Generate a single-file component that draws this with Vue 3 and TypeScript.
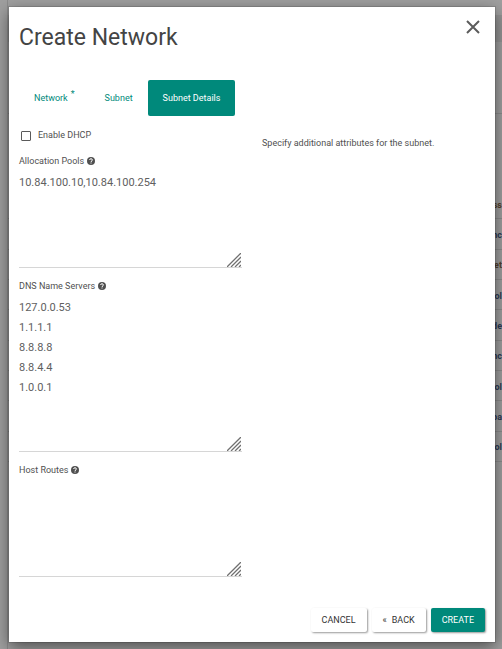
<script setup lang="ts">
import { ref } from 'vue'

interface Field {
  id: string
  label: string
  size: 'short' | 'tall'
  value: string
}

const tabs = [
  { name: 'Network', required: true },
  { name: 'Subnet', required: false },
  { name: 'Subnet Details', required: false },
]
const activeTab = ref('Subnet Details')
const enableDhcp = ref(false)

const fields = ref<Field[]>([
  { id: 'allocation-pools', label: 'Allocation Pools', size: 'short', value: '10.84.100.10,10.84.100.254' },
  { id: 'dns-servers', label: 'DNS Name Servers', size: 'tall', value: '127.0.0.53\n1.1.1.1\n8.8.8.8\n8.8.4.4\n1.0.0.1' },
  { id: 'host-routes', label: 'Host Routes', size: 'short', value: '' },
])

const pageRows = [
  { text: 'ss', tone: 'brown' },
  { text: 'nc', tone: 'navy' },
  { text: 'et', tone: 'brown' },
  { text: 'ol', tone: 'navy' },
  { text: 'de', tone: 'navy' },
  { text: 'nc', tone: 'navy' },
  { text: 'ol', tone: 'navy' },
  { text: 'ba', tone: 'navy' },
  { text: 'ol', tone: 'navy' },
]
</script>

<template>
  <div class="screen">
    <div class="page" aria-hidden="true">
      <div class="page-side"></div>
      <div class="page-main">
        <div class="page-bar"></div>
        <div class="page-heading"></div>
        <div class="page-rows">
          <div v-for="(row, i) in pageRows" :key="i" class="page-row" :class="row.tone">{{ row.text }}</div>
        </div>
      </div>
    </div>

    <section class="modal" role="dialog" aria-labelledby="modal-title">
      <header class="modal-header">
        <h1 id="modal-title">Create Network</h1>
        <button type="button" class="close" aria-label="Close">
          <svg width="14" height="14" viewBox="0 0 14 14">
            <path d="M1 1 13 13M13 1 1 13" fill="none" stroke="#5c5c5c" stroke-width="2" />
          </svg>
        </button>
      </header>

      <nav class="tabs">
        <button
          v-for="tab in tabs"
          :key="tab.name"
          type="button"
          class="tab"
          :class="{ active: tab.name === activeTab }"
          @click="activeTab = tab.name"
        >{{ tab.name }}<sup v-if="tab.required">*</sup></button>
      </nav>

      <div class="columns">
        <form class="column" @submit.prevent>
          <label class="check">
            <input v-model="enableDhcp" type="checkbox" />
            <span>Enable DHCP</span>
          </label>
          <div v-for="field in fields" :key="field.id" class="field">
            <div class="field-label">
              <label :for="field.id">{{ field.label }}</label>
              <svg class="help" width="8" height="8" viewBox="0 0 16 16">
                <circle cx="8" cy="8" r="8" fill="#505050" />
                <path d="M5.2 6C5.2 2.6 10.8 2.6 10.8 6 10.8 7.8 8 7.8 8 10" fill="none" stroke="#fff" stroke-width="2" />
                <rect x="7" y="11" width="2" height="2" fill="#fff" />
              </svg>
            </div>
            <div class="area">
              <textarea :id="field.id" v-model="field.value" :class="field.size" spellcheck="false"></textarea>
              <svg class="grip" width="14" height="14" viewBox="0 0 14 14">
                <path d="M0 14 14 0M4 14 14 4M8 14 14 8M12 14 14 12" fill="none" stroke="#707070" stroke-width="1.3" />
              </svg>
            </div>
          </div>
        </form>
        <div class="column">
          <p class="hint">Specify additional attributes for the subnet.</p>
        </div>
      </div>

      <footer class="modal-footer">
        <button type="button" class="btn">CANCEL</button>
        <button type="button" class="btn"><span class="chevrons">«</span>BACK</button>
        <button type="button" class="btn primary">CREATE</button>
      </footer>
    </section>
  </div>
</template>

<style>
body {
  background: #9f9f9f;
}
</style>

<style scoped>
.screen {
  display: grid;
  min-height: 100vh;
  overflow: hidden;
  background: #9f9f9f;
  color: #505050;
  font: 9px/18px Roboto, 'Liberation Sans', sans-serif;
}

.page,
.modal {
  grid-area: 1 / 1;
}

.page {
  display: flex;
}

.page-side {
  width: 7px;
  border-right: 1px solid #8c8c8c;
}

.page-main {
  flex: 1;
}

.page-bar {
  height: 27px;
  margin-top: 15px;
  background: #949494;
}

.page-heading {
  height: 71px;
  margin-bottom: 75px;
  border-bottom: 1px solid #8c8c8c;
}

.page-rows {
  display: grid;
  grid-auto-rows: 1fr;
  height: 273px;
}

.page-row {
  display: flex;
  align-items: center;
  justify-content: flex-end;
  padding-top: 2px;
  border-bottom: 1px solid #8c8c8c;
  font-weight: 700;
}

.navy {
  color: #2c3a54;
}

.brown {
  color: #54402c;
}

.modal {
  position: relative;
  align-self: start;
  margin: 7px 7px 7px 9px;
  background: #fff;
  box-shadow: 0 0 0 1px rgba(0, 0, 0, 0.12), 0 5px 15px rgba(0, 0, 0, 0.5);
}

button {
  border: 0;
  background: none;
  color: inherit;
  font: inherit;
  cursor: pointer;
}

.modal-header {
  display: flex;
  align-items: flex-start;
  justify-content: space-between;
  padding: 13px 15px 0 10px;
}

h1 {
  margin: 0;
  font-size: 23px;
  font-weight: 400;
  line-height: 36px;
  color: #444;
}

.close {
  display: flex;
  padding: 0;
}

.tabs {
  display: flex;
  margin-top: 24px;
  padding: 0 10px;
}

.tab {
  padding: 0 15px;
  border-radius: 2px;
  color: #00897b;
  line-height: 36px;
  white-space: nowrap;
}

.tab.active {
  background: #00897b;
  color: #fff;
}

.tab sup {
  margin-left: 3px;
  font-size: 9px;
  line-height: 0;
}

.columns {
  display: grid;
  grid-template-columns: 1fr 1fr;
  padding-top: 10px;
}

.column {
  min-width: 0;
  padding: 0 10px;
}

.check {
  display: flex;
  gap: 7px;
  margin-bottom: 8px;
}

.check input {
  appearance: none;
  width: 10px;
  height: 10px;
  margin: 5px 0 0 2px;
  border: 1px solid #5a5a5a;
  border-radius: 1px;
}

.check input:checked {
  background: #00897b;
}

.field {
  margin-bottom: 9px;
}

.field-label {
  display: flex;
  align-items: center;
  gap: 3px;
}

.area {
  position: relative;
}

textarea {
  display: block;
  box-sizing: border-box;
  width: 100%;
  padding: 3px 0 0;
  border: 0;
  border-bottom: 1px solid #d6d6d6;
  outline: 0;
  background: none;
  color: #606060;
  font: 11px/20px Roboto, 'Liberation Sans', sans-serif;
  resize: none;
}

.short {
  height: 98px;
}

.tall {
  height: 157px;
}

.grip {
  position: absolute;
  right: 1px;
  bottom: 1px;
}

.hint {
  margin: 8px 0 0;
}

.modal-footer {
  display: flex;
  justify-content: flex-end;
  gap: 5px;
  padding: 22px 10px 10px;
}

.btn {
  padding: 0 11px;
  border-radius: 2px;
  box-shadow: 1px 1px 2px rgba(0, 0, 0, 0.4);
  color: #333;
  line-height: 24px;
}

.primary {
  background: #00897b;
  color: #fff;
}

.chevrons {
  margin-right: 5px;
}
</style>
